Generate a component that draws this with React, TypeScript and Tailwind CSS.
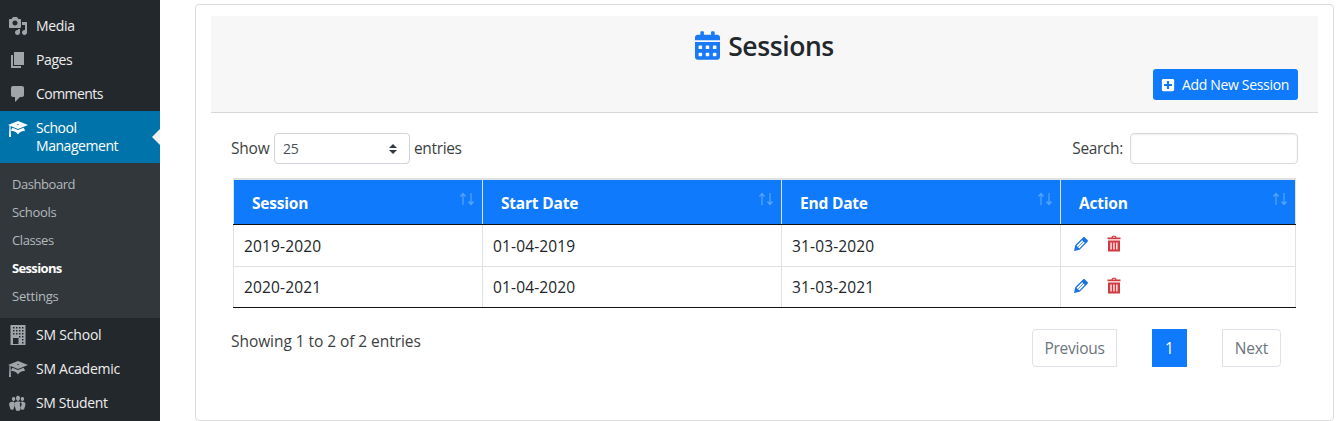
import React from "react";
import { FaCalendarAlt, FaPlusSquare } from "react-icons/fa";

const learnPath =
  "M10 10L2.54 7.02 3 18H1l.48-11.41L0 6l10-4 10 4zm0-5c-.55 0-1 .22-1 .5s.45.5 1 .5 1-.22 1-.5-.45-.5-1-.5zm0 6l5.57-2.23c.71.94 1.2 2.07 1.36 3.3-.3-.04-.61-.07-.93-.07-2.55 0-4.78 1.37-6 3.41C8.78 13.37 6.55 12 4 12c-.32 0-.63.03-.93.07.16-1.23.65-2.36 1.36-3.3z";
const mediaPath =
  "M13 11V4c0-.55-.45-1-1-1h-1.67L9 1H5L3.67 3H2c-.55 0-1 .45-1 1v7c0 .55.45 1 1 1h10c.55 0 1-.45 1-1zM7 4.5c1.38 0 2.5 1.12 2.5 2.5S8.38 9.5 7 9.5 4.5 8.38 4.5 7 5.62 4.5 7 4.5zM14 6h5v10.5c0 1.38-1.12 2.5-2.5 2.5S14 17.88 14 16.5s1.12-2.5 2.5-2.5c.17 0 .34.02.5.05V9h-3V6zm-4 8.05V13h2v3.5c0 1.38-1.12 2.5-2.5 2.5S7 17.88 7 16.5 8.12 14 9.5 14c.17 0 .34.02.5.05z";
const pagesPath = "M6 15V2h10v13H6zm-1 1h8v2H3V5h2v11z";
const commentsPath =
  "M5 2h9c1.1 0 2 .9 2 2v7c0 1.1-.9 2-2 2h-2l-5 5v-5H5c-1.1 0-2-.9-2-2V4c0-1.1.9-2 2-2z";
const buildingPath =
  "M2.500 0h15v20h-15zM5 2v1.500h1.500V2zm3 0v1.500h1.500V2zm3 0v1.500h1.500V2zm3 0v1.500h1.500V2zM5 5v1.500h1.500V5zm3 0v1.500h1.500V5zm3 0v1.500h1.500V5zm3 0v1.500h1.500V5zM5 8v1.500h1.500V8zm3 0v1.500h1.500V8zm3 0v1.500h1.500V8zm3 0v1.500h1.500V8zM5 13v6h5.500v-6zm6-2v1.500h1.500V11zm3 0v1.500h1.500V11zm0 3v1.500h1.500V14zm0 3v1.500h1.500V17z";
const groupsPath =
  "M8.03 4.46c-.29 1.28.55 3.46 1.97 3.46 1.41 0 2.25-2.18 1.96-3.46-.22-.98-1.08-1.63-1.96-1.63-.89 0-1.74.65-1.97 1.63zm-4.13.9c-.25 1.08.47 2.93 1.67 2.93s1.92-1.85 1.67-2.93c-.19-.83-.92-1.39-1.67-1.39s-1.48.56-1.67 1.39zm8.86 0c-.25 1.08.47 2.93 1.66 2.93 1.2 0 1.92-1.85 1.67-2.93-.19-.83-.92-1.39-1.67-1.39-.74 0-1.47.56-1.66 1.39zm-.59 11.43l1.25-4.3C14.2 10 12.71 8.47 10 8.47c-2.72 0-4.21 1.53-3.44 4.02l1.26 4.3C8.05 17.51 9 18 10 18c.98 0 1.94-.49 2.17-1.21zm-6.1-7.63c.49.67.96 1.83.42 3.59l-1.12 3.79c-.34.2-.77.31-1.2.31-.85 0-1.65-.41-1.85-1.03l-1.07-3.65c-.65-2.11.61-3.4 2.92-3.4.27 0 .54.02.79.06.39.05.76.16 1.11.33zm8.35-.39c2.31 0 3.58 1.29 2.92 3.4l-1.07 3.65c-.2.62-1 1.03-1.85 1.03-.43 0-.86-.11-1.2-.31l-1.11-3.77c-.55-1.78-.08-2.94.42-3.61.35-.17.72-.28 1.11-.33.25-.04.52-.06.78-.06z";
const editPath =
  "M13.89 3.39l2.71 2.72c.46.46.42 1.24.03 1.64l-8.01 8.02-5.56 1.16 1.16-5.58s7.6-7.63 7.99-8.03c.39-.39 1.22-.39 1.68.07zm-2.73 2.79l-5.59 5.61 1.11 1.11 5.54-5.65zm-2.97 8.23l5.58-5.6-1.07-1.08-5.59 5.6z";
const trashPath =
  "M7.500 3.500C7.500 2.300 8.500 1.700 9.700 1.700h.6c1.200 0 2.200.6 2.200 1.800h4v1.800h-13V3.500zm1.100 0h2.800c-.1-.5-.5-.8-1.200-.8h-.4c-.7 0-1.100.3-1.200.8zM4 6.500h12v11H4zM6.400 8.500v7h1.300v-7zm2.900 0v7h1.300v-7zm2.900 0v7h1.300v-7z";

function Icon({ d, className }: { d: string; className?: string }) {
  return (
    <svg viewBox="0 0 20 20" fill="currentColor" fillRule="evenodd" className={`size-5 shrink-0 ${className ?? ""}`}>
      <path d={d} />
    </svg>
  );
}

function MenuItem({ d, label, track }: { d: string; label: string; track: string }) {
  return (
    <a className="flex h-[34px] items-center pl-2 text-[#eee]">
      <Icon d={d} className="text-[#a0a5aa]" />
      <span className={`ml-2 text-[14px] leading-[18px] whitespace-nowrap ${track}`}>{label}</span>
    </a>
  );
}

const submenu = [
  { label: "Dashboard", cls: "tracking-[-0.45px]" },
  { label: "Schools", cls: "tracking-[-0.3px]" },
  { label: "Classes", cls: "tracking-[-0.4px]" },
  { label: "Sessions", cls: "font-bold text-white tracking-[-0.65px]" },
  { label: "Settings", cls: "tracking-[-0.2px]" },
];

function Sidebar() {
  return (
    <nav className="flex h-[421px] w-40 shrink-0 flex-col overflow-hidden bg-[#23282d] pt-[9px]">
      <MenuItem d={mediaPath} label="Media" track="tracking-[-0.35px]" />
      <MenuItem d={pagesPath} label="Pages" track="tracking-[-0.4px]" />
      <MenuItem d={commentsPath} label="Comments" track="tracking-[-0.55px]" />
      <a className="relative flex h-[52px] items-start bg-[#0073aa] pt-2 pl-2 text-white">
        <Icon d={learnPath} />
        <span className="ml-2 w-24 text-[14px] leading-[18px] tracking-[-0.45px]">
          School
          <br />
          Management
        </span>
        <svg viewBox="0 0 8 16" className="absolute top-[18px] right-0 h-4 w-2 fill-[#f1f1f1]">
          <path d="M8 0L0 8l8 8z" />
        </svg>
      </a>
      <div className="flex h-[155px] flex-col bg-[#32373c] pt-[7px] text-[#b4b9be]">
        {submenu.map((s) => (
          <a key={s.label} className={`block h-7 pl-3 text-[13px] leading-7 ${s.cls}`}>
            {s.label}
          </a>
        ))}
      </div>
      <MenuItem d={buildingPath} label="SM School" track="tracking-[-0.2px]" />
      <MenuItem d={learnPath} label="SM Academic" track="tracking-[-0.27px]" />
      <MenuItem d={groupsPath} label="SM Student" track="tracking-[-0.35px]" />
    </nav>
  );
}

function SortArrows() {
  return (
    <svg viewBox="0 0 16 14" className="h-3.5 w-4 fill-none stroke-[#58a5ff] stroke-[1.2]">
      <path d="M4 13V2M1.500 4.500L4 1.500l2.500 3M12 1v11M9.500 9.500l2.500 3 2.500-3" />
    </svg>
  );
}

const columns = ["Session", "Start Date", "End Date", "Action"];
const rows = [
  ["2019-2020", "01-04-2019", "31-03-2020"],
  ["2020-2021", "01-04-2020", "31-03-2021"],
];

function SessionTable() {
  return (
    <div className="mt-[14px] ml-[2px] w-[1063px] border-t-2 border-b border-t-[#dee2e6] border-b-[#111] text-[#212529]">
      <div className="grid h-[45px] grid-cols-[250px_299px_279px_235px] border-b border-[#111] bg-[#0f7afb]">
        {columns.map((c) => (
          <div
            key={c}
            className="flex h-[44px] justify-between border-r border-[#dee2e6] pr-[7px] pl-[18px] text-[15.500px] leading-[46px] font-bold tracking-[-0.2px] text-white first:border-l"
          >
            {c}
            <div className="pt-[12px]">
              <SortArrows />
            </div>
          </div>
        ))}
      </div>
      {rows.map((r) => (
        <div
          key={r[0]}
          className="grid h-[42px] grid-cols-[250px_299px_279px_235px] border-b border-[#dee2e6] text-[15.500px] leading-[42px] tracking-[0.14px] last:h-[40px] last:border-b-0 last:leading-[40px]"
        >
          {r.map((v) => (
            <div key={v} className="border-r border-[#dee2e6] pl-[10px] first:border-l">
              {v}
            </div>
          ))}
          <div className="flex items-start border-r border-[#dee2e6] pt-[9px] pl-[10px]">
            <Icon d={editPath} className="text-[#1a73e0]" />
            <Icon d={trashPath} className="ml-[13px] text-[#d23a40]" />
          </div>
        </div>
      ))}
    </div>
  );
}

export default function App() {
  return (
    <div className="flex h-[421px] w-[1339px] overflow-hidden bg-white font-['Open_Sans','Noto_Sans',sans-serif]">
      <Sidebar />
      <main className="mt-[4px] ml-[35px] h-[417px] w-[1139px] rounded border border-[#dcdcdc] px-[15px] pt-[11px] text-[#3c3f42]">
        <header className="flex h-[97px] flex-col border-b border-[#d8d8d8] bg-[#f7f7f7] px-5">
          <h1 className="mt-[14px] flex h-[34px] items-center justify-center text-[26.500px] font-semibold tracking-[-0.4px] text-[#23282d]">
            <FaCalendarAlt className="mr-[8px] mb-[3px] h-[29px] w-[25px] text-[#1a79f5]" />
            Sessions
          </h1>
          <button className="mt-[5px] flex h-[31px] w-[145px] items-center self-end rounded-[3px] bg-[#0f7afb] pl-2 text-[14px] tracking-[-0.33px] whitespace-nowrap text-white">
            <FaPlusSquare className="mr-[7px] size-[14px]" />
            Add New Session
          </button>
        </header>
        <section className="px-5 pt-5">
          <div className="flex h-[31px] items-center text-[15.500px] tracking-[-0.35px]">
            <span className="w-[43px] tracking-[-0.2px]">Show</span>
            <div className="flex h-[31px] w-[136px] items-center justify-between rounded border border-[#ced4da] pr-3 pl-2 text-[14px] tracking-[-0.3px] text-[#495057]">
              25
              <svg viewBox="0 0 8 10" className="h-[10px] w-2 fill-[#343a40]">
                <path d="M4 0l4 4H0zM0 6h8l-4 4z" />
              </svg>
            </div>
            <span className="ml-[4px]">entries</span>
            <span className="ml-auto">Search:</span>
            <input className="ml-[7px] h-[31px] w-[168px] rounded border border-[#d9d9d9] bg-white shadow-[inset_0_1px_2px_rgba(0,0,0,0.07)]" />
          </div>
          <SessionTable />
          <footer className="mt-[21px] flex h-[38px] items-start text-[15.500px]">
            <span className="leading-6 tracking-[-0.06px]">Showing 1 to 2 of 2 entries</span>
            <div className="mr-[17px] ml-auto flex gap-[35px] text-[#6c757d]">
              <button className="h-[38px] w-[85px] rounded-l border border-[#dee2e6] pt-px tracking-[-0.25px]">Previous</button>
              <button className="h-[38px] w-[35px] bg-[#0f7afb] pt-px text-white">1</button>
              <button className="h-[38px] w-[59px] rounded-r border border-[#dee2e6] pt-px tracking-[-0.1px]">Next</button>
            </div>
          </footer>
        </section>
      </main>
    </div>
  );
}
